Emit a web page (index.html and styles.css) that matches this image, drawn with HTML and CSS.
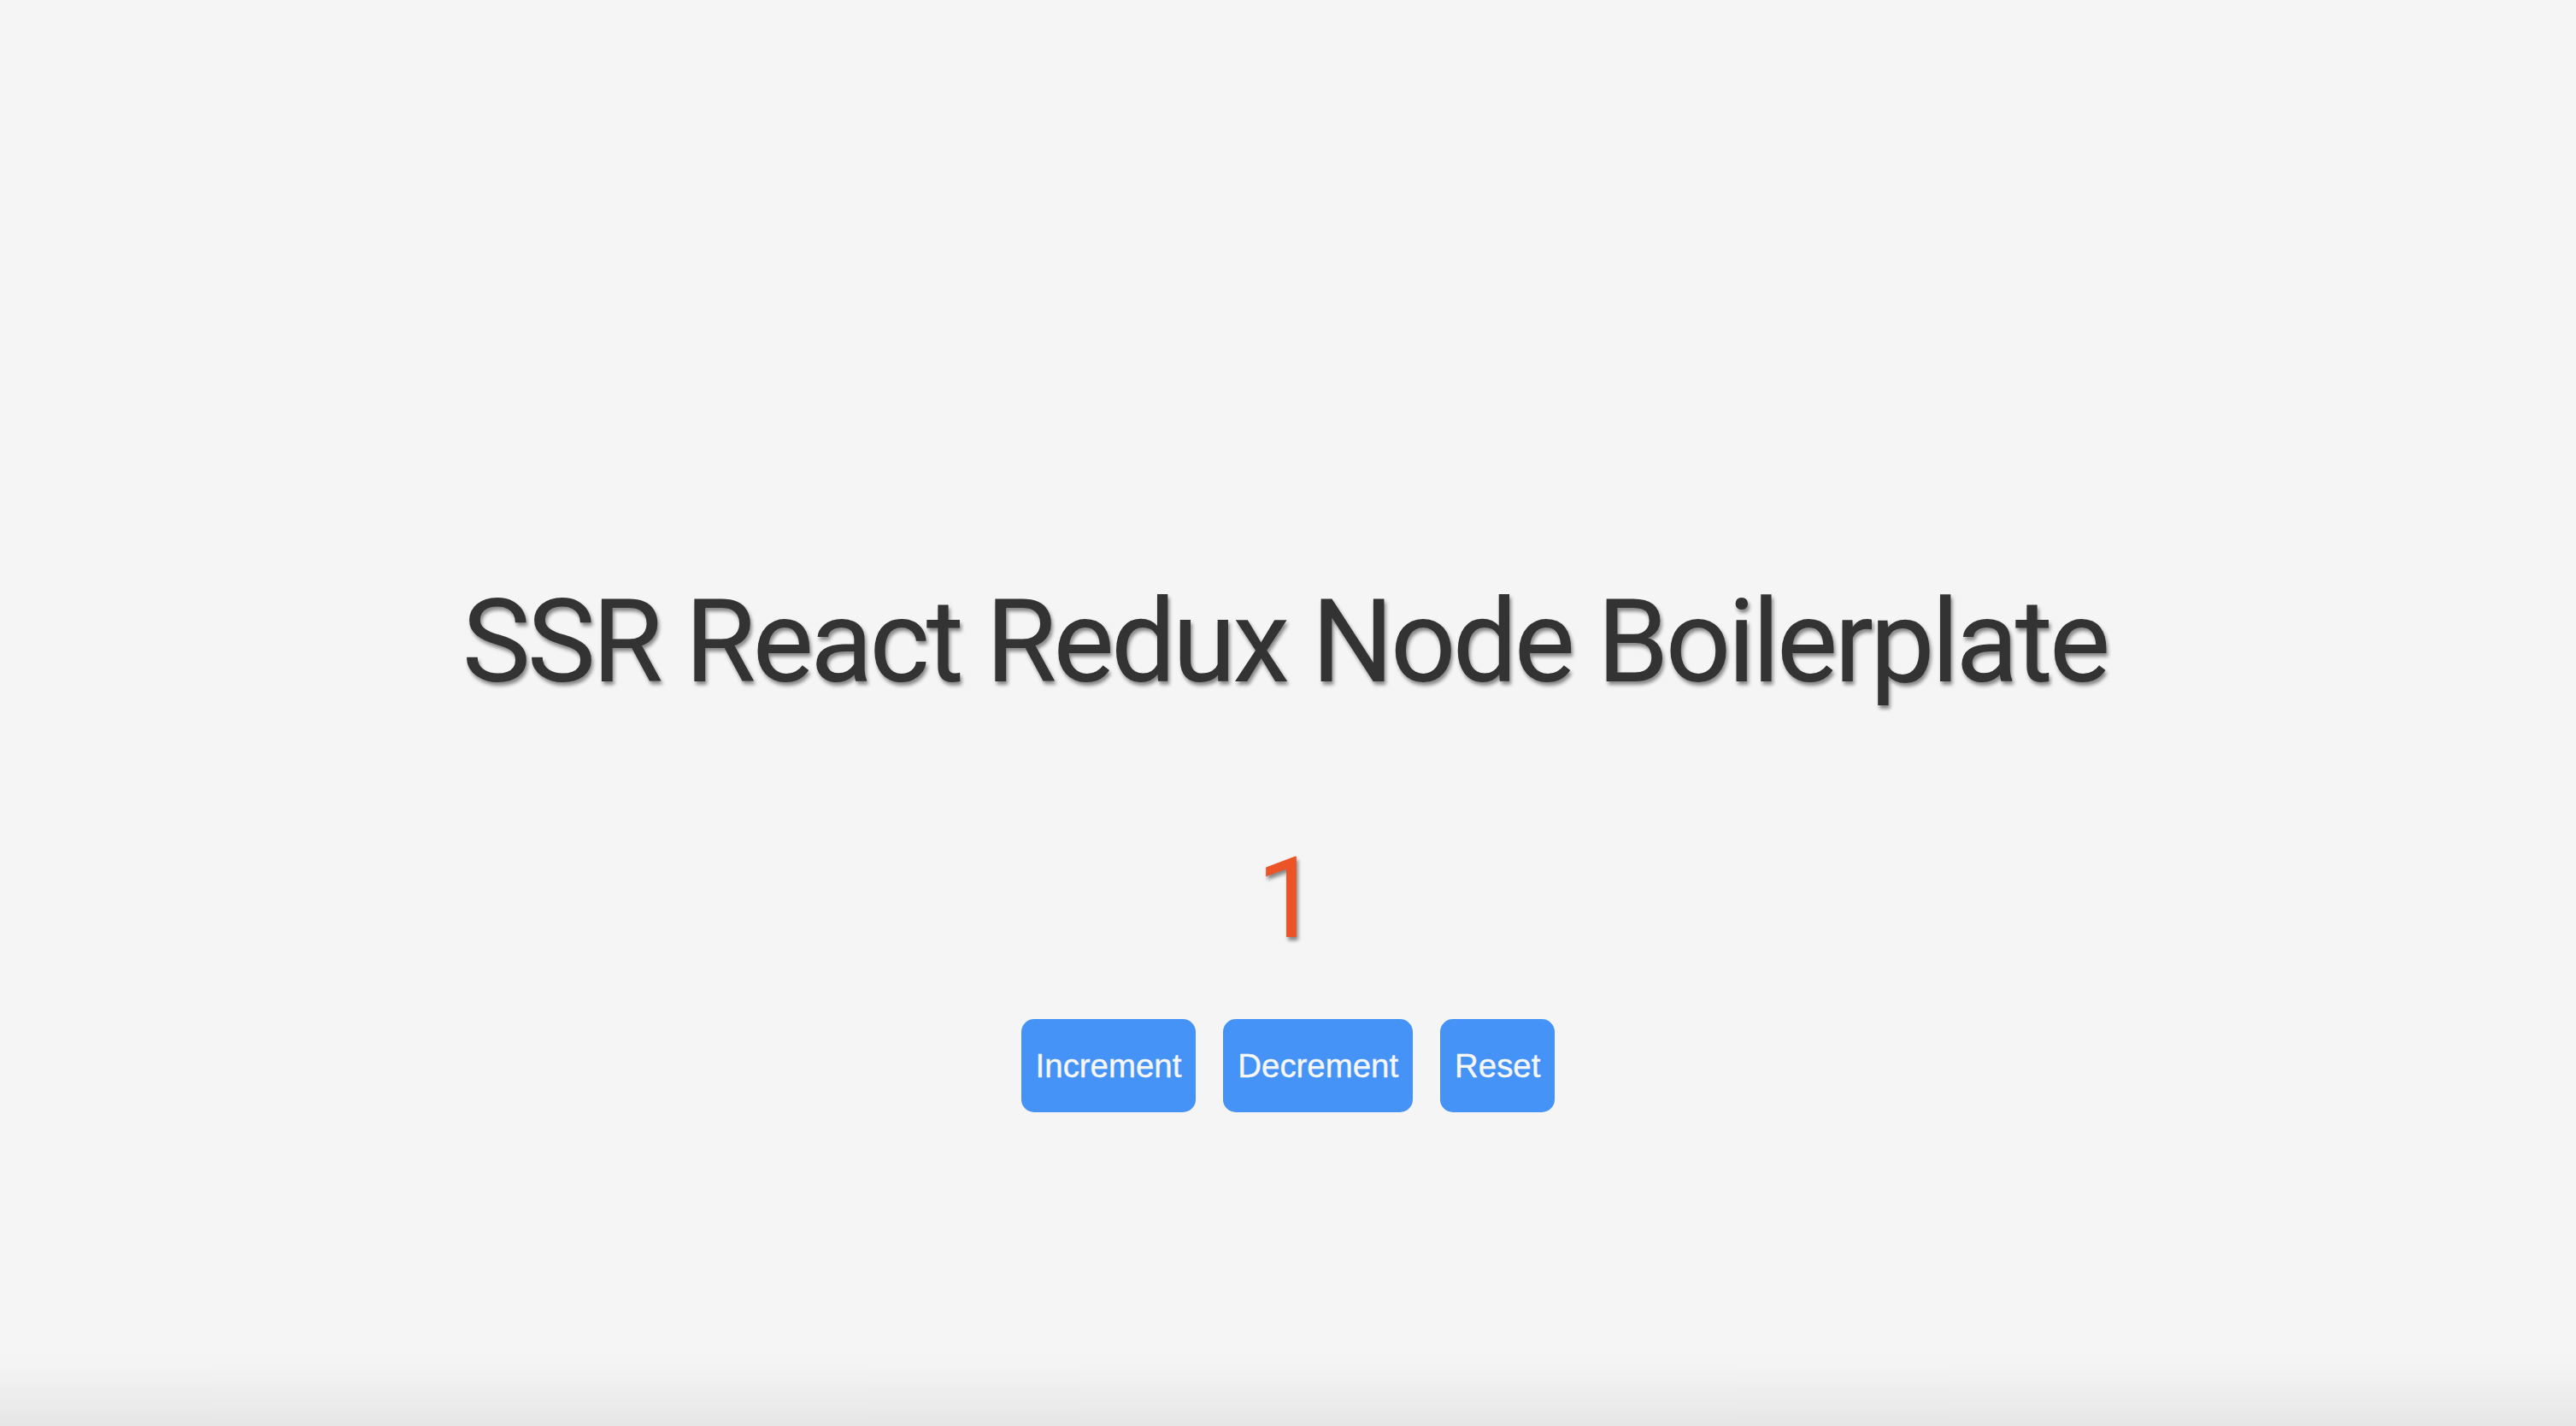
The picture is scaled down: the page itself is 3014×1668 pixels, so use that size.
FILE: index.html
```html
<!DOCTYPE html>
<html lang="en">
<head>
<meta charset="utf-8">
<title>SSR React Redux Node Boilerplate</title>
<link rel="stylesheet" href="styles.css">
</head>
<body>
<main class="app">
  <h1 class="title">SSR React Redux Node Boilerplate</h1>
  <div class="counter">1</div>
  <div class="actions">
    <button class="btn">Increment</button>
    <button class="btn">Decrement</button>
    <button class="btn">Reset</button>
  </div>
</main>
</body>
</html>
```
FILE: styles.css
```css
html, body {
  margin: 0;
  padding: 0;
}
body {
  min-height: 100vh;
  background: linear-gradient(to bottom, #f5f5f5 0, #f5f5f5 calc(100% - 80px), #e6e6e6 100%);
  font-family: Roboto, "Liberation Sans", sans-serif;
}
.app {
  display: flex;
  flex-direction: column;
  align-items: center;
  padding-top: 672px;
}
.title {
  margin: 0;
  padding-right: 8px;
  font-family: Roboto, sans-serif;
  font-weight: 400;
  font-size: 135px;
  line-height: 158px;
  letter-spacing: -4.1px;
  color: #333333;
  text-shadow: 2px 4px 4px rgba(0, 0, 0, 0.45);
}
.counter {
  margin-top: 144px;
  font-family: Roboto, sans-serif;
  font-weight: 400;
  font-size: 131px;
  line-height: 154px;
  color: #ec5428;
  text-shadow: 2px 4px 4px rgba(0, 0, 0, 0.45);
}
.actions {
  display: flex;
  gap: 32px;
  margin-top: 64px;
}
.btn {
  height: 109px;
  padding: 0 17px;
  border: none;
  border-radius: 15px;
  background: #4593f7;
  color: #f7f7f7;
  font-family: "Liberation Sans", Arial, sans-serif;
  font-size: 38.4px;
  line-height: 109px;
  -webkit-text-stroke: 0.4px #f7f7f7;
  cursor: pointer;
}
```
